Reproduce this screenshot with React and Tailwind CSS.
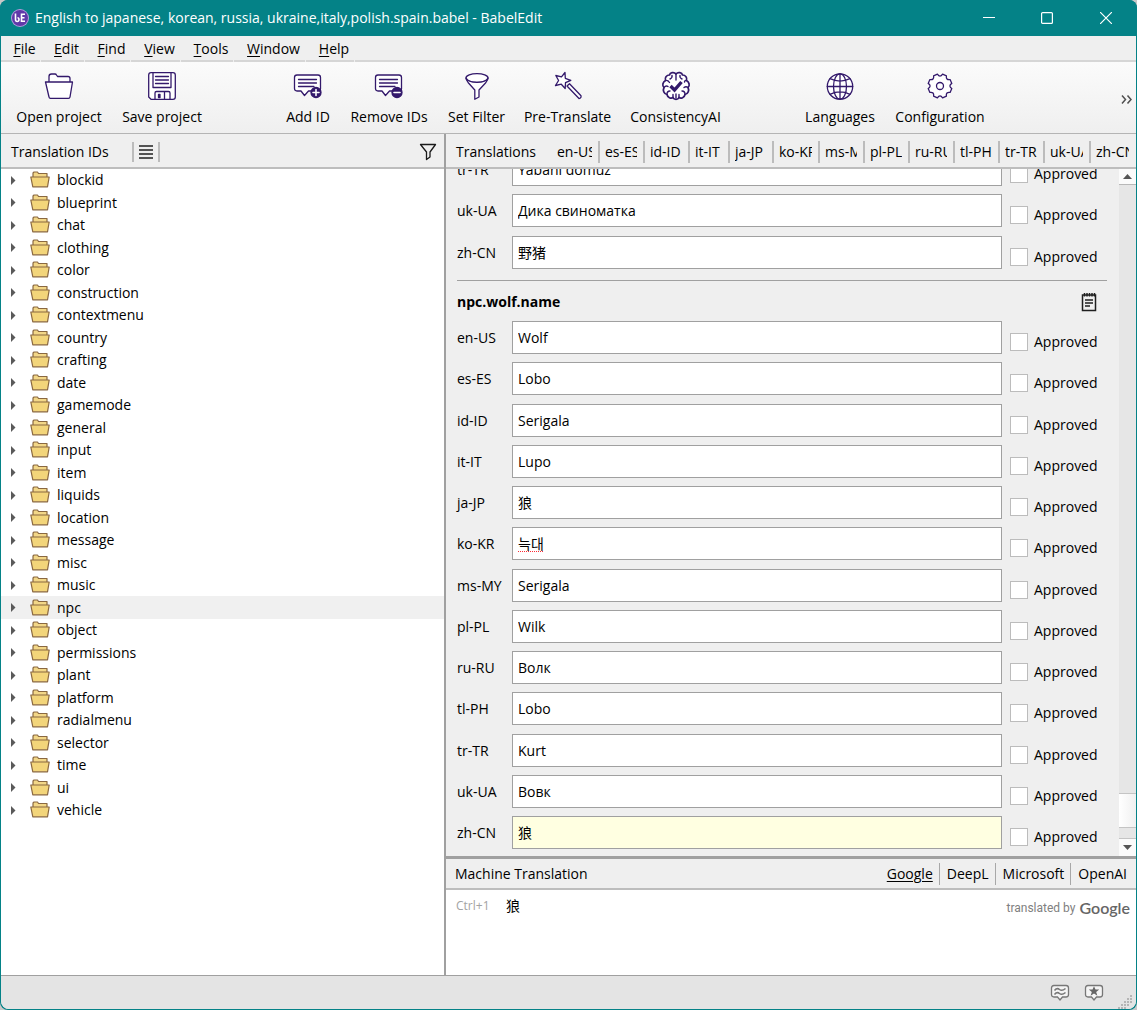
import React, { useState } from 'react';

const IDS = [
  'blockid', 'blueprint', 'chat', 'clothing', 'color', 'construction', 'contextmenu', 'country',
  'crafting', 'date', 'gamemode', 'general', 'input', 'item', 'liquids', 'location', 'message',
  'misc', 'music', 'npc', 'object', 'permissions', 'plant', 'platform', 'radialmenu', 'selector',
  'time', 'ui', 'vehicle',
];

const MENUS = [
  { label: 'File', width: 'w-[39px]' },
  { label: 'Edit', width: 'w-[43px]' },
  { label: 'Find', width: 'w-[45px]' },
  { label: 'View', width: 'w-[49px]' },
  { label: 'Tools', width: 'w-[52px]' },
  { label: 'Window', width: 'w-[71px]' },
  { label: 'Help', width: 'w-[48px]' },
];

const LANGUAGES = [
  { code: 'en-US', width: 'w-[48px]' },
  { code: 'es-ES', width: 'w-[45px]' },
  { code: 'id-ID', width: 'w-[45px]' },
  { code: 'it-IT', width: 'w-[40px]' },
  { code: 'ja-JP', width: 'w-[44px]' },
  { code: 'ko-KR', width: 'w-[46px]' },
  { code: 'ms-MY', width: 'w-[45px]' },
  { code: 'pl-PL', width: 'w-[45px]' },
  { code: 'ru-RU', width: 'w-[45px]' },
  { code: 'tl-PH', width: 'w-[45px]' },
  { code: 'tr-TR', width: 'w-[45px]' },
  { code: 'uk-UA', width: 'w-[46px]' },
  { code: 'zh-CN', width: 'w-[44px]' },
];

const BOAR = [
  { lang: 'tr-TR', text: 'Yabani domuz' },
  { lang: 'uk-UA', text: 'Дика свиноматка' },
  { lang: 'zh-CN', text: '野猪' },
];

const WOLF = [
  { lang: 'en-US', text: 'Wolf' },
  { lang: 'es-ES', text: 'Lobo' },
  { lang: 'id-ID', text: 'Serigala' },
  { lang: 'it-IT', text: 'Lupo' },
  { lang: 'ja-JP', text: '狼' },
  { lang: 'ko-KR', text: '늑대', misspelled: true },
  { lang: 'ms-MY', text: 'Serigala' },
  { lang: 'pl-PL', text: 'Wilk' },
  { lang: 'ru-RU', text: 'Волк' },
  { lang: 'tl-PH', text: 'Lobo' },
  { lang: 'tr-TR', text: 'Kurt' },
  { lang: 'uk-UA', text: 'Вовк' },
  { lang: 'zh-CN', text: '狼', active: true },
];

const ENGINES = ['Google', 'DeepL', 'Microsoft', 'OpenAI'];

// Shared wrapper for the 32px toolbar icons
function ToolIcon({ children }) {
  return (
    <svg
      className="h-8 w-8"
      viewBox="0 0 32 32"
      fill="none"
      stroke="#33196b"
      strokeWidth="1.3"
      strokeLinecap="round"
      strokeLinejoin="round"
    >
      {children}
    </svg>
  );
}

function OpenIcon() {
  return (
    <ToolIcon>
      <path fill="#fff" d="M6 12V6.5Q6 4 8.500 4H12Q13 4 13.500 5L14.500 6.500H25Q27 6.500 27 8.500V12" />
      <path fill="#fff" d="M2.500 12H29.500L27 27Q26.800 28.300 25.500 28.300H7.500Q6.200 28.300 6 27Z" />
    </ToolIcon>
  );
}

function SaveIcon() {
  return (
    <ToolIcon>
      <path fill="#fff" d="M5 2.700H27Q29.300 2.700 29.300 5V27Q29.300 29.300 27 29.300H5L2.700 27V5Q2.700 2.700 5 2.700Z" />
      <path d="M7 2.700V17.500H25V2.700M9.500 6.500H22.500M9.500 10H22.500M9.500 13.500H22.500" />
      <path d="M9 29V23Q9 21.500 10.500 21.500H22.500Q24 21.500 24 23V29M18.500 21.500V29" />
      <path fill="#33196b" d="M12.500 24.500H14V27.500H12.500Z" />
    </ToolIcon>
  );
}

function BubbleIcon({ plus }) {
  return (
    <ToolIcon>
      <path
        fill="#fff"
        d="M5 5H26Q28.500 5 28.500 7.500V18.500Q28.500 21 26 21H16.500L12.500 25.500L9 21H5Q2.500 21 2.500 18.500V7.500Q2.500 5 5 5Z"
      />
      <path d="M6.500 9.500H24.500M6.500 13H24.500M6.500 16.500H22" />
      <circle cx="24" cy="22.500" r="5" fill="#33196b" />
      <path stroke="#fff" strokeWidth="1.600" d={plus ? 'M21 22.500H27M24 19.500V25.500' : 'M21 22.500H27'} />
    </ToolIcon>
  );
}

function FilterIcon() {
  return (
    <ToolIcon>
      <ellipse cx="16" cy="8" rx="11" ry="4.300" fill="#fff" />
      <path fill="#fff" d="M5 8Q5 10 7.500 13L13.800 20V29.300L18 27V20L24.500 13Q27 10 27 8Q25 12.300 16 12.300Q7 12.300 5 8Z" />
    </ToolIcon>
  );
}

function WandIcon() {
  return (
    <ToolIcon>
      <path fill="#fff" d="M13 2.500L13.300 8.300L18.800 10.300L13.500 12.700L13.200 18.500L9.300 14.200L3.500 15.500L6.600 10.500L3.800 5.500L9.500 6.800Z" />
      <path fill="#fff" d="M15 16L17.500 13.800L29 25.800Q29.500 28 27 28.500Z" />
    </ToolIcon>
  );
}

function BrainIcon() {
  return (
    <ToolIcon>
      <path
        fill="#fff"
        strokeWidth="1.700"
        d="M16 4C14 1.500 10 2.500 9.500 5C6.500 5 4.500 8 5.500 10.500C2.500 12 2 16 4 17.500C2.500 20.500 4 24 7 24.500C7.500 27.500 11 29 13 27.500C14 30 18 30 19 27.500C21 29 24.500 27.500 25 24.500C28 24 29.500 20.500 28 17.500C30 16 29.500 12 26.500 10.500C27.500 8 25.500 5 22.500 5C22 2.500 18 1.500 16 4Z"
      />
      <path
        strokeWidth="1.400"
        d="M16 4V10M12 5.500Q12.500 8 10 9M20 5.500Q19.500 8 22 9M5.500 10.500Q8 10 9.500 12.500M26.500 10.500Q25 10 24.500 12M4 17.500Q6 15 8 16.500M28 17.500Q26 16 24 17.500M7 24.500Q7 21 10 21M25 24.500Q25 21 22 21M13 27.500V24.500M19 27.500V24.500M16 24V28"
      />
      <path strokeWidth="3.400" strokeLinecap="butt" strokeLinejoin="miter" d="M10.500 16L14.500 20L21.500 12" />
    </ToolIcon>
  );
}

function GlobeIcon() {
  return (
    <ToolIcon>
      <circle cx="16" cy="16.500" r="12.700" fill="#fff" />
      <ellipse cx="16" cy="16.500" rx="6.500" ry="12.700" />
      <path d="M16 3.800V29.200M3.300 16.500H28.700M6 8.700Q16 13.500 26 8.700M6 24.300Q16 19.500 26 24.300" />
    </ToolIcon>
  );
}

function GearIcon() {
  return (
    <ToolIcon>
      <path
        fill="#fff"
        d="M13.400 4.200Q16 8 18.600 4.200L22.400 5.900Q21.700 10.300 26.100 9.600L27.800 13.400Q24 16 27.800 18.600L26.100 22.400Q21.700 21.700 22.400 26.100L18.600 27.800Q16 24 13.400 27.800L9.600 26.100Q10.300 21.700 5.900 22.400L4.200 18.600Q8 16 4.200 13.400L5.900 9.600Q10.300 10.300 9.600 5.900Z"
      />
      <circle cx="16" cy="16" r="3.500" />
    </ToolIcon>
  );
}

const TOOLS = [
  { label: 'Open project', icon: <OpenIcon />, className: 'w-[106px]' },
  { label: 'Save project', icon: <SaveIcon />, className: 'w-[100px]' },
  { label: 'Add ID', icon: <BubbleIcon plus />, className: 'ml-16 w-[64px]' },
  { label: 'Remove IDs', icon: <BubbleIcon />, className: 'w-[98px]' },
  { label: 'Set Filter', icon: <FilterIcon />, className: 'w-[77px]' },
  { label: 'Pre-Translate', icon: <WandIcon />, className: 'w-[105px]' },
  { label: 'ConsistencyAI', icon: <BrainIcon />, className: 'w-[111px]' },
  { label: 'Languages', icon: <GlobeIcon />, className: 'ml-16 w-[90px]' },
  { label: 'Configuration', icon: <GearIcon />, className: 'w-[110px]' },
];

function TitleBar() {
  return (
    <header className="flex h-9 shrink-0 items-center bg-[#048287] pr-px pl-[11px] text-white">
      <svg className="h-[18px] w-[18px]" viewBox="0 0 18 18">
        <circle cx="9" cy="9" r="9" fill="#b79ae0" />
        <circle cx="9" cy="9" r="8" fill="#6039a8" />
        <path
          d="M4.500 4.500V10.500Q4.500 12.500 6.200 12.500T8 10.500Q8 8.700 6.500 8.700M14 5.300H10.500V12.300H14M10.500 8.800H13.500"
          fill="none"
          stroke="#fff"
          strokeWidth="1.600"
        />
      </svg>
      <h1 className="ml-[6px] flex-1 truncate text-sm">
        English to japanese, korean, russia, ukraine,italy,polish.spain.babel - BabelEdit
      </h1>
      <button aria-label="Minimize" className="flex h-9 w-[58px] items-center justify-center">
        <svg className="h-3 w-3" viewBox="0 0 12 12" stroke="#fff"><path d="M0 5.500H12" /></svg>
      </button>
      <button aria-label="Maximize" className="flex h-9 w-[58px] items-center justify-center">
        <svg className="h-3 w-3" viewBox="0 0 12 12" fill="none" stroke="#fff" strokeWidth="1.200">
          <rect x="0.600" y="0.600" width="10.800" height="10.800" rx="1" />
        </svg>
      </button>
      <button aria-label="Close" className="flex h-9 w-[60px] items-center justify-center">
        <svg className="h-3 w-3" viewBox="0 0 12 12" stroke="#fff" strokeWidth="1.200"><path d="M0 0L12 12M12 0L0 12" /></svg>
      </button>
    </header>
  );
}

function MenuBar() {
  return (
    <nav className="flex h-[26px] shrink-0 gap-px">
      {MENUS.map((menu) => (
        <button key={menu.label} className={`border-b-2 border-[#d6d6d6] pt-px pl-2 text-center ${menu.width}`}>
          <span className="underline underline-offset-2">{menu.label[0]}</span>
          {menu.label.slice(1)}
        </button>
      ))}
      <div className="flex-1 border-b-2 border-[#d6d6d6]" />
    </nav>
  );
}

function Toolbar() {
  return (
    <div className="flex h-[72px] shrink-0 border-b border-[#b4b4b4] bg-linear-to-b from-[#fbfbfb] to-[#efefef] pl-[5px]">
      {TOOLS.map((tool) => (
        <button
          key={tool.label}
          className={`flex shrink-0 flex-col items-center gap-[5px] pt-2 whitespace-nowrap ${tool.className}`}
        >
          {tool.icon}
          <span className="leading-5">{tool.label}</span>
        </button>
      ))}
      <button aria-label="More tools" className="ml-auto flex w-5 items-center justify-center pt-[3px]">
        <svg className="h-[9px] w-[11px]" viewBox="0 0 11 9" fill="none" stroke="#505050" strokeWidth="1.500">
          <path d="M1 0.500L4.500 4.500L1 8.500M6.500 0.500L10 4.500L6.500 8.500" />
        </svg>
      </button>
    </div>
  );
}

function FolderIcon() {
  return (
    <svg className="h-[18px] w-5 shrink-0" viewBox="0 0 20 18" stroke="#8a6840" strokeWidth="1.200" strokeLinejoin="round">
      <path fill="#f3d787" d="M3 7V2L4 1H7.500L8.500 2.500H17V7" />
      <path fill="#f3d57a" d="M0.800 6H19.200L17.500 15.800H2.800Z" />
    </svg>
  );
}

function IdTree({ selected, onSelect }) {
  return (
    <ul className="flex-1 overflow-hidden bg-white">
      {IDS.map((id) => (
        <li key={id} className="odd:h-[22px] even:h-[23px]">
          <button
            onClick={() => onSelect(id)}
            className={`flex h-full w-full items-center text-left ${id === selected ? 'bg-[#f0f0f0]' : ''}`}
          >
            <svg className="ml-[9px] h-[9px] w-[6px]" viewBox="0 0 6 9"><path fill="#5a5a5a" d="M1 0L5.500 4.500L1 9Z" /></svg>
            <span className="ml-[14px] flex"><FolderIcon /></span>
            <span className="ml-[7px] leading-[22px]">{id}</span>
          </button>
        </li>
      ))}
    </ul>
  );
}

function IdPanel() {
  const [selected, setSelected] = useState('npc');

  return (
    <section className="flex w-[443px] shrink-0 flex-col">
      <div className="flex h-[35px] shrink-0 items-center border-b-2 border-[#bdbdbd] pt-[3px] pl-[10px]">
        <h2 className="w-[121px]">Translation IDs</h2>
        <button aria-label="List view" className="flex h-5 w-7 items-center justify-center border-x-2 border-[#bcbcbc]">
          <svg className="h-[14px] w-4" viewBox="0 0 16 14" stroke="#222" strokeWidth="1.300">
            <path d="M1 1H15M1 5H15M1 9H15M1 13H15" />
          </svg>
        </button>
        <button aria-label="Filter IDs" className="mr-[7px] ml-auto">
          <svg className="h-[18px] w-[18px]" viewBox="0 0 18 18" fill="none" stroke="#1a1a1a" strokeWidth="1.300" strokeLinejoin="round">
            <path d="M1.500 1.500H16.500L11 9V14L7.500 16.500V9Z" />
          </svg>
        </button>
      </div>
      <IdTree selected={selected} onSelect={setSelected} />
    </section>
  );
}

function TranslationRow({ group, row }) {
  const inputId = `${group}-${row.lang}`;

  return (
    <div className="flex h-[41px] items-start last:h-10 nth-[4n+2]:h-[42px]">
      <label htmlFor={inputId} className="w-[55px] shrink-0 leading-[33px]">{row.lang}</label>
      <input
        id={inputId}
        type="text"
        spellCheck={false}
        defaultValue={row.text}
        className={`h-[33px] min-w-0 flex-1 border border-[#a0a0a0] px-[5px] pb-px outline-none ${
          row.active ? 'bg-[#ffffe1]' : 'bg-white'
        } ${row.misspelled ? 'underline decoration-red-500 decoration-dotted decoration-1 underline-offset-2' : ''}`}
      />
      <label className="ml-2 flex w-[97px] shrink-0 items-center gap-[6px] pt-[10px] leading-[22px]">
        <input type="checkbox" className="h-[18px] w-[18px] appearance-none border border-[#bcbcbc] bg-white checked:bg-[#33196b]" />
        Approved
      </label>
    </div>
  );
}

function ScrollBar() {
  return (
    <div className="flex w-[17px] shrink-0 flex-col bg-[#e6e6e6]">
      <button aria-label="Scroll up" className="flex h-4 items-center justify-center border-b border-[#b8b8b8] bg-[#fbfbfb]">
        <svg className="h-[5px] w-[9px]" viewBox="0 0 9 5"><path fill="#555" d="M0 5L4.500 0L9 5Z" /></svg>
      </button>
      <div className="flex-1" />
      <div className="h-[35px] border-y border-[#c4c4c4] bg-linear-to-r from-white to-[#f0f0f0]" />
      <div className="h-[10px]" />
      <button aria-label="Scroll down" className="flex h-[18px] items-center justify-center border-t border-[#c4c4c4] bg-[#fbfbfb]">
        <svg className="h-[5px] w-[9px]" viewBox="0 0 9 5"><path fill="#555" d="M0 0L4.500 5L9 0Z" /></svg>
      </button>
    </div>
  );
}

function TranslationList() {
  return (
    <div className="flex min-h-0 flex-1">
      {/* scrolled to the end, so the first rows run out at the top */}
      <div className="flex min-w-0 flex-1 flex-col justify-end overflow-hidden pr-3 pl-[11px]">
        <div className="shrink-0">
          {BOAR.map((row) => <TranslationRow key={row.lang} group="boar" row={row} />)}
        </div>
        <div className="mt-1 flex h-[41px] shrink-0 items-center border-t border-[#a0a0a0] pt-px pr-[9px]">
          <h3 className="flex-1 font-bold">npc.wolf.name</h3>
          <button aria-label="Comment">
            <svg className="h-5 w-[18px]" viewBox="0 0 18 20" fill="none" stroke="#1f1f1f" strokeWidth="1.500">
              <rect x="2.500" y="3" width="13" height="15.500" />
              <path d="M4.500 1V4.500M7 1V4.500M9.500 1V4.500M12 1V4.500M14.500 1V4.500M5 8H13M5 11H13M5 14H10" />
            </svg>
          </button>
        </div>
        <div className="shrink-0">
          {WOLF.map((row) => <TranslationRow key={row.lang} group="wolf" row={row} />)}
        </div>
      </div>
      <ScrollBar />
    </div>
  );
}

function MachineTranslation() {
  const [engine, setEngine] = useState('Google');

  return (
    <section className="shrink-0 border-t-[3px] border-[#a0a0a0]">
      <div className="flex h-[31px] items-center border-b-2 border-[#bdbdbd] pt-px pl-[9px]">
        <h2 className="flex-1">Machine Translation</h2>
        <div className="flex divide-x divide-[#a8a8a8] pr-[3px]">
          {ENGINES.map((name) => (
            <button
              key={name}
              onClick={() => setEngine(name)}
              className={`pr-[6px] pl-[7px] leading-[22px] ${name === engine ? 'underline underline-offset-2' : ''}`}
            >
              {name}
            </button>
          ))}
        </div>
      </div>
      <div className="flex h-[85px] items-start bg-white pt-1 pr-[6px] pl-[10px]">
        <span className="w-[50px] text-xs leading-6 text-[#a3a3a3]">Ctrl+1</span>
        <span className="flex-1 leading-6">狼</span>
        <span className="font-['Roboto'] text-xs leading-7 text-[#808080]">translated by</span>
        <span className="ml-1 font-['Lato'] text-base leading-7 font-semibold text-[#666]">Google</span>
      </div>
    </section>
  );
}

function TranslationPanel() {
  return (
    <section className="flex min-w-0 flex-1 flex-col border-l-2 border-[#a0a0a0]">
      <div className="flex h-[35px] shrink-0 items-center overflow-hidden border-b-2 border-[#bdbdbd] pt-[3px] pl-[10px]">
        <h2 className="w-24 shrink-0">Translations</h2>
        {LANGUAGES.map((lang) => (
          <button
            key={lang.code}
            className={`h-[22px] shrink-0 border-r-2 border-[#bcbcbc] pr-[6px] pl-[5px] text-left last:border-r-0 ${lang.width}`}
          >
            <span className="block overflow-hidden whitespace-nowrap">{lang.code}</span>
          </button>
        ))}
      </div>
      <TranslationList />
      <MachineTranslation />
    </section>
  );
}

function StatusBar() {
  return (
    <footer className="flex h-[34px] shrink-0 items-center justify-end gap-[14px] border-t border-[#a0a0a0] bg-[#e4e4e4] pr-1">
      <button aria-label="Similar translations">
        <svg className="h-[18px] w-5" viewBox="0 0 20 18" fill="none" stroke="#777" strokeWidth="1.300">
          <path fill="#f4f4f4" d="M4 1.500H16Q18.500 1.500 18.500 4V10.500Q18.500 13 16 13H12.500L10 16L7.500 13H4Q1.500 13 1.500 10.500V4Q1.500 1.500 4 1.500Z" />
          <path strokeWidth="1.600" d="M4.500 6.500Q7 3.500 9.500 5.500T15.500 4.500M4.500 10.500Q7 7.500 9.500 9.500T15.500 8.500" />
        </svg>
      </button>
      <button aria-label="Rate translation">
        <svg className="h-[18px] w-5" viewBox="0 0 20 18" fill="none" stroke="#777" strokeWidth="1.300">
          <path fill="#f4f4f4" d="M4 1.500H16Q18.500 1.500 18.500 4V10.500Q18.500 13 16 13H12.500L10 16L7.500 13H4Q1.500 13 1.500 10.500V4Q1.500 1.500 4 1.500Z" />
          <path fill="#666" stroke="none" d="M10 2.200L11.500 5.600H15.200L12.200 8L13.400 11.800L10 9.600L6.600 11.800L7.800 8L4.800 5.600H8.500Z" />
        </svg>
      </button>
      <svg className="h-[14px] w-[14px] self-end" viewBox="0 0 14 14" fill="#b5b5b5">
        <path d="M12 0h2v2h-2zM9 3h2v2H9zM12 3h2v2h-2zM6 6h2v2H6zM9 6h2v2H9zM12 6h2v2h-2zM3 9h2v2H3zM6 9h2v2H6zM9 9h2v2H9zM0 12h2v2H0zM3 12h2v2H3zM6 12h2v2H6z" />
      </svg>
    </footer>
  );
}

function App() {
  return (
    <div className="h-screen bg-[#c8c8c8]">
      <div className="flex h-full flex-col overflow-hidden rounded-lg bg-[#048287] font-['Open_Sans','Noto_Sans_CJK_SC',sans-serif] text-sm text-black">
        <TitleBar />
        <main className="mx-px mb-px flex min-h-0 flex-1 flex-col overflow-hidden rounded-b-lg bg-[#efefef]">
          <MenuBar />
          <Toolbar />
          <div className="flex min-h-0 flex-1">
            <IdPanel />
            <TranslationPanel />
          </div>
          <StatusBar />
        </main>
      </div>
    </div>
  );
}

export default App;
